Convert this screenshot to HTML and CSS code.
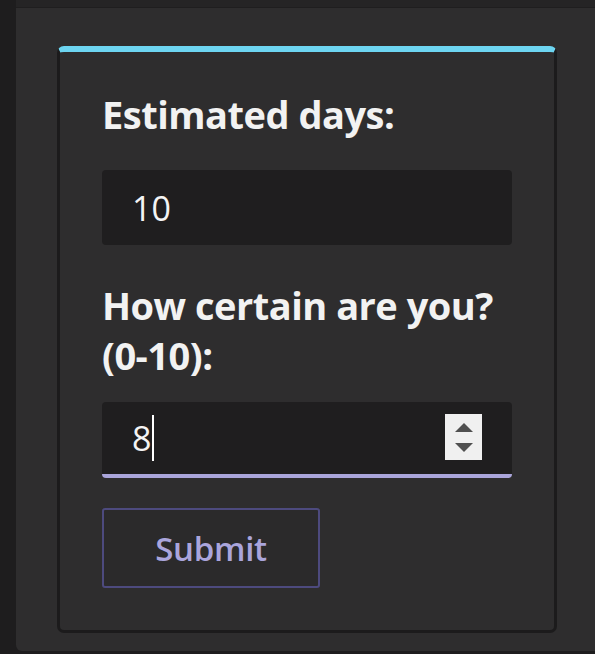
FILE: index.html
```html
<!DOCTYPE html>
<html lang="en">
<head>
<meta charset="utf-8">
<title>Estimate</title>
<link rel="stylesheet" href="styles.css">
</head>
<body>
<div class="topbar"></div>
<div class="panel">
  <form class="card">
    <label class="label label-days">Estimated days:</label>
    <div class="field field-days"><span class="value">10</span></div>
    <label class="label label-certain">How certain are you? (0-10):</label>
    <div class="field field-active">
      <span class="value">8</span><span class="caret"></span>
      <span class="spinner"><span class="tri tri-up"></span><span class="tri tri-down"></span></span>
    </div>
    <button type="button" class="submit">Submit</button>
  </form>
</div>
</body>
</html>
```

FILE: styles.css
```css
* { box-sizing: border-box; }

html, body {
  margin: 0;
  padding: 0;
  background: #1e1d1e;
  font-family: "Open Sans", "Noto Sans", sans-serif;
  overflow: hidden;
}

.topbar {
  margin-left: 16px;
  height: 8px;
  background: #252425;
  border-bottom: 1px solid #1f1e1f;
}

.panel {
  margin-left: 16px;
  background: #2e2d2e;
  border-radius: 0 0 0 6px;
  padding: 38px 0 18px 41px;
}

.card {
  display: flex;
  flex-direction: column;
  align-items: flex-start;
  width: 500px;
  background: #2e2d2e;
  border: 3px solid #1c1b1c;
  border-top: 6px solid #6dd5f1;
  border-radius: 7px;
  padding: 37px 42px 42px 42px;
}

.label {
  display: block;
  width: 410px;
  color: #f2f2f2;
  font-weight: 700;
  font-size: 38px;
  line-height: 50px;
  letter-spacing: -0.5px;
}

.label-days { margin-bottom: 31px; }
.label-certain { margin-bottom: 22px; }

.field {
  position: relative;
  display: flex;
  align-items: center;
  width: 410px;
  height: 75px;
  background: #1f1e1f;
  border-radius: 4px;
  padding-left: 30px;
  color: #f4f4f4;
  font-size: 34px;
}

.field-days { margin-bottom: 35px; }

.field-active {
  height: 76px;
  border-bottom: 4px solid #aaa5da;
  margin-bottom: 30px;
}

.value { line-height: 1; }

.caret {
  display: block;
  width: 2px;
  height: 46px;
  background: #ffffff;
  margin-left: 1px;
}

.spinner {
  position: absolute;
  right: 30px;
  top: 12px;
  width: 37px;
  height: 46px;
  background: #f0f0f0;
  display: flex;
  flex-direction: column;
  align-items: center;
  justify-content: center;
  gap: 11px;
}

.tri {
  display: block;
  width: 0;
  height: 0;
  border-left: 9px solid transparent;
  border-right: 9px solid transparent;
}

.tri-up { border-bottom: 9px solid #505050; }
.tri-down { border-top: 9px solid #505050; }

.submit {
  width: 218px;
  height: 80px;
  background: #2b2a2b;
  border: 2px solid #4d4a7e;
  border-radius: 3px;
  color: #aaa5dc;
  font-family: "Open Sans", "Noto Sans", sans-serif;
  font-weight: 600;
  font-size: 33px;
  padding: 0;
  letter-spacing: -0.3px;
}
```
